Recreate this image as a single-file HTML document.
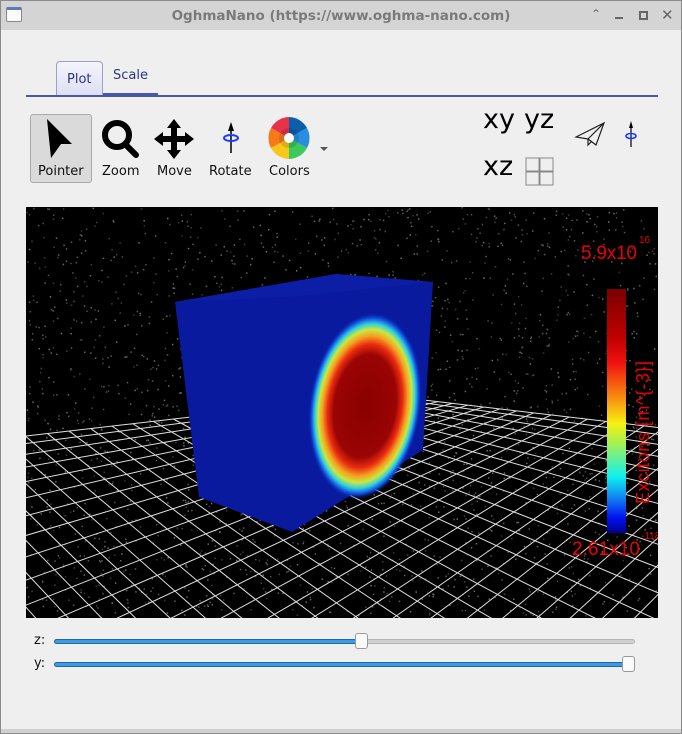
<!DOCTYPE html>
<html><head><meta charset="utf-8"><style>
*{margin:0;padding:0;box-sizing:border-box}
html,body{width:682px;height:734px;overflow:hidden}
body{background:#efefef;font-family:"Liberation Sans","DejaVu Sans",sans-serif;position:relative}
.win{position:absolute;left:0;top:0;width:682px;height:734px;border:1px solid #8a8a8a;background:#efefef;overflow:hidden}
.title{position:absolute;left:0;top:0;width:680px;height:29px;background:#d4d4d4;color:#7a7a7a;font-size:13.5px;font-weight:bold;text-align:center;line-height:30px;font-family:"DejaVu Sans",sans-serif}
.abs{position:absolute}
.lbl{position:absolute;font-size:13px;color:#111;font-family:"DejaVu Sans",sans-serif}
</style></head><body>
<div class="win">
<div class="title">OghmaNano (https://www.oghma-nano.com)</div>
<div class="abs" style="left:5px;top:6px;width:16px;height:15px;border:1px solid #888;background:#fafafa;border-top:3px solid #5a7ab8;border-radius:2px"></div>
<div class="abs" style="left:590px;top:6px;font-size:12px;color:#666">&#8963;</div>
<div class="abs" style="left:614px;top:16px;width:8px;height:2px;background:#666"></div>
<div class="abs" style="left:638px;top:10px;width:9px;height:9px;border:2px solid #666"></div>
<div class="abs" style="left:660px;top:5px;font-size:15px;color:#666">✕</div>

<div class="abs" style="left:55px;top:60px;width:47px;height:36px;border:1px solid #9aa0c8;border-bottom:none;border-radius:4px 4px 0 0;background:linear-gradient(#f4f4fa,#dcdff4)"></div>
<div class="abs" style="left:66px;top:71px;font-size:13px;color:#2c3480;font-family:'DejaVu Sans',sans-serif">Plot</div>
<div class="abs" style="left:112px;top:67px;font-size:13px;color:#2c3480;font-family:'DejaVu Sans',sans-serif">Scale</div>
<div class="abs" style="left:102px;top:92px;width:55px;height:2px;background:#4a56a8"></div>
<div class="abs" style="left:25px;top:94px;width:632px;height:2px;background:#4a56a8"></div>

<div class="abs" style="left:29px;top:113px;width:62px;height:69px;background:#dadada;border:1px solid #aaa;border-radius:3px"></div>
<svg class="abs" style="left:38px;top:115px" width="40" height="46" viewBox="0 0 40 46"><path d="M8 3 L33 28 L22 28 L12 42 Z" fill="#000"/></svg>
<div class="lbl" style="left:37px;top:163px">Pointer</div>
<svg class="abs" style="left:99px;top:117px" width="42" height="44"><circle cx="17" cy="17" r="12" fill="none" stroke="#000" stroke-width="6"/><line x1="26" y1="27" x2="36" y2="37" stroke="#000" stroke-width="6" stroke-linecap="round"/></svg>
<div class="lbl" style="left:101px;top:163px">Zoom</div>
<svg class="abs" style="left:152px;top:117px" width="42" height="42" viewBox="0 0 42 42"><path d="M21 1 L28 10 L24 10 L24 18 L32 18 L32 14 L41 21 L32 28 L32 24 L24 24 L24 32 L28 32 L21 41 L14 32 L18 32 L18 24 L10 24 L10 28 L1 21 L10 14 L10 18 L18 18 L18 10 L14 10 Z" fill="#000"/></svg>
<div class="lbl" style="left:156px;top:163px">Move</div>
<svg class="abs" style="left:215px;top:120px" width="30" height="34"><line x1="15" y1="4" x2="15" y2="32" stroke="#000" stroke-width="1.5"/><path d="M15 1 L12 10 L18 10Z" fill="#000"/><ellipse cx="15" cy="17" rx="7" ry="3" fill="none" stroke="#1a3cff" stroke-width="2"/></svg>
<div class="lbl" style="left:208px;top:163px">Rotate</div>
<svg class="abs" style="left:266px;top:116px" width="44" height="42" viewBox="-21 -21 42 42">
<path d="M0 0 L0 -21 A21 21 0 0 1 18 -10 Z" fill="#0a5fa8"/>
<path d="M0 0 L18 -10 A21 21 0 0 1 18 10 Z" fill="#2a8ee0"/>
<path d="M0 0 L18 10 A21 21 0 0 1 0 21 Z" fill="#3cc85a"/>
<path d="M0 0 L0 21 A21 21 0 0 1 -18 10 Z" fill="#f7c81a"/>
<path d="M0 0 L-18 10 A21 21 0 0 1 -18 -10 Z" fill="#f77a1a"/>
<path d="M0 0 L-18 -10 A21 21 0 0 1 0 -21 Z" fill="#e8324a"/>
<circle r="10" fill="rgba(0,0,0,0.12)"/><circle r="5" fill="#fff"/></svg>
<div class="abs" style="left:319px;top:146px;width:0;height:0;border-left:4px solid transparent;border-right:4px solid transparent;border-top:4px solid #555"></div>
<div class="lbl" style="left:268px;top:163px">Colors</div>

<div class="abs" style="left:482px;top:103px;font-size:27px;color:#000;font-family:'DejaVu Sans',sans-serif">xy</div>
<div class="abs" style="left:523px;top:103px;font-size:27px;color:#000;font-family:'DejaVu Sans',sans-serif">yz</div>
<div class="abs" style="left:482px;top:150px;font-size:27px;color:#000;font-family:'DejaVu Sans',sans-serif">xz</div>
<svg class="abs" style="left:524px;top:156px" width="30" height="29"><rect x="1" y="1" width="13" height="13" fill="none" stroke="#888"/><rect x="15" y="1" width="13" height="13" fill="none" stroke="#888"/><rect x="1" y="15" width="13" height="13" fill="none" stroke="#888"/><rect x="15" y="15" width="13" height="13" fill="none" stroke="#888"/></svg>
<svg class="abs" style="left:573px;top:120px" width="32" height="26"><path d="M2 16 L30 2 L22 24 L14 18 Z M14 18 L30 2 M14 18 L14 24 L18 20" fill="none" stroke="#222" stroke-width="1.2"/></svg>
<svg class="abs" style="left:620px;top:120px" width="20" height="28"><line x1="10" y1="3" x2="10" y2="26" stroke="#000" stroke-width="1.2"/><path d="M10 0 L8 7 L12 7Z" fill="#000"/><ellipse cx="10" cy="15" rx="5" ry="2.5" fill="none" stroke="#1a3cff" stroke-width="1.6"/></svg>

<svg id="v" class="abs" style="left:25px;top:206px;overflow:hidden" width="632" height="411" viewBox="25 206 632 411">
<defs>
<radialGradient id="hs" cx="0.5" cy="0.5" r="0.5">
<stop offset="0" stop-color="#8a0000"/>
<stop offset="0.55" stop-color="#9a0404"/>
<stop offset="0.66" stop-color="#e82a10"/>
<stop offset="0.75" stop-color="#f6a020"/>
<stop offset="0.82" stop-color="#c8e840"/>
<stop offset="0.88" stop-color="#30d0e0"/>
<stop offset="0.94" stop-color="#1050e0"/>
<stop offset="1" stop-color="#0a1a9a" stop-opacity="0"/>
</radialGradient>
<linearGradient id="cb" x1="0" y1="0" x2="0" y2="1">
<stop offset="0" stop-color="#7a0000"/><stop offset="0.2" stop-color="#c00000"/><stop offset="0.3" stop-color="#f01010"/>
<stop offset="0.45" stop-color="#f89010"/><stop offset="0.55" stop-color="#f8f010"/><stop offset="0.63" stop-color="#a8f050"/>
<stop offset="0.77" stop-color="#10f0f0"/><stop offset="0.87" stop-color="#1070f0"/><stop offset="0.94" stop-color="#0010f0"/><stop offset="1" stop-color="#00008a"/>
</linearGradient>
</defs>
<rect x="25" y="206" width="632" height="411" fill="#000"/>
<g id="stars"></g>
<g id="grid" stroke="#e0e0e0" stroke-width="1"></g>
<polygon points="174,301 335,273 432,281 422,449 291,531 198,496" fill="#0a1a9e"/>
<polygon points="174,301 335,273 432,281 300,295" fill="#0c1ea6"/>
<ellipse cx="364" cy="405" rx="56" ry="94" fill="url(#hs)" transform="rotate(8 364 405)"/>
<rect x="606" y="288" width="19" height="244" fill="url(#cb)"/>
<text x="580" y="258" fill="#e00" font-size="19" textLength="56" font-family="Liberation Sans,sans-serif">5.9x10</text>
<text x="638" y="242" fill="#e00" font-size="10" font-family="Liberation Sans,sans-serif">16</text>
<text x="571" y="554" fill="#e00" font-size="19" textLength="68" font-family="Liberation Sans,sans-serif">2.61x10</text>
<text x="640" y="538" fill="#e00" font-size="10" font-family="Liberation Sans,sans-serif">-118</text>
<text transform="translate(648 503) rotate(-90)" fill="#e00" font-size="18" textLength="143" font-family="Liberation Sans,sans-serif">Excitons [m^{-3}]</text>
</svg>

<div class="lbl" style="left:33px;top:632px">z:</div>
<div class="lbl" style="left:33px;top:655px">y:</div>
<div class="abs" style="left:53px;top:638px;width:581px;height:5px;background:#d0d0d0;border:1px solid #b4b4b4;border-radius:3px"></div>
<div class="abs" style="left:53px;top:638px;width:308px;height:5px;background:#3d9ae0;border:1px solid #1e6aa8;border-radius:3px"></div>
<div class="abs" style="left:354px;top:632px;width:13px;height:16px;background:#fafafa;border:1px solid #999;border-radius:3px"></div>
<div class="abs" style="left:53px;top:661px;width:581px;height:5px;background:#3d9ae0;border:1px solid #1e6aa8;border-radius:3px"></div>
<div class="abs" style="left:621px;top:655px;width:13px;height:16px;background:#fafafa;border:1px solid #999;border-radius:3px"></div>
<div class="abs" style="left:0;top:728px;width:680px;height:5px;background:#d0d0d0"></div>
</div>
<script>
var NS="http://www.w3.org/2000/svg";
var st=document.getElementById("stars"),s=12345;
function r(){s=(s*1103515245+12345)%2147483648;return s/2147483648;}
for(var i=0;i<2200;i++){var e=document.createElementNS(NS,"rect");e.setAttribute("x",25+r()*630);e.setAttribute("y",206+r()*409);e.setAttribute("width",1.5);e.setAttribute("height",1.5);var g=Math.floor(50+r()*60);e.setAttribute("fill","rgb("+g+","+(g+5)+","+g+")");st.appendChild(e);}
var gr=document.getElementById("grid");
var B=[380,394],L=[-260,468],R=[960,462],F=[330,1300];
function P(u,v){return [B[0]+u*(L[0]-B[0])+v*(R[0]-B[0])+u*v*(F[0]-L[0]-R[0]+B[0]),B[1]+u*(L[1]-B[1])+v*(R[1]-B[1])+u*v*(F[1]-L[1]-R[1]+B[1])];}
function ln(a,b){var e=document.createElementNS(NS,"line");e.setAttribute("x1",a[0]);e.setAttribute("y1",a[1]);e.setAttribute("x2",b[0]);e.setAttribute("y2",b[1]);gr.appendChild(e);}
var N=32;
for(var k=0;k<=N;k++){var t=Math.pow(k/N,1.25);ln(P(t,0),P(t,1));ln(P(0,t),P(1,t));}
</script>
</body></html>
